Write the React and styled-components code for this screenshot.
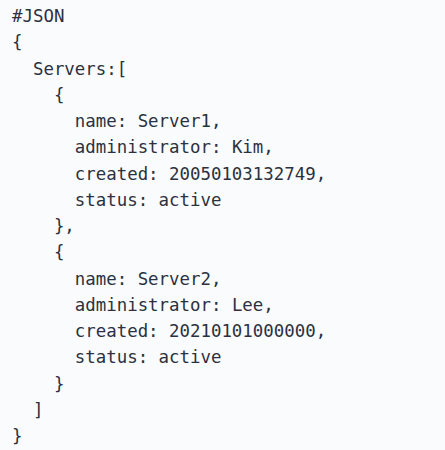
import React from "react"
import styled, { createGlobalStyle } from "styled-components"

const GlobalStyle = createGlobalStyle`
  html, body {
    margin: 0;
    padding: 0;
    background: #fafbfd;
  }
`

const CodeBlock = styled.div`
  box-sizing: border-box;
  width: 445px;
  height: 450px;
  padding: 3px 12px 0;
  background: #fafbfd;
  font-family: "DejaVu Sans Mono", "Liberation Mono", monospace;
  font-size: 17.4px;
  line-height: 26.25px;
  color: #2b3140;
  overflow: hidden;
`

const Line = styled.div`
  white-space: pre;
  padding-left: ${(p) => p.level * 2}ch;
  height: 26.25px;
`

const servers = [
  { name: "Server1", administrator: "Kim", created: "20050103132749", status: "active" },
  { name: "Server2", administrator: "Lee", created: "20210101000000", status: "active" },
]

export default function App() {
  return (
    <>
      <GlobalStyle />
      <CodeBlock>
        <Line level={0}>#JSON</Line>
        <Line level={0}>{"{"}</Line>
        <Line level={1}>Servers:[</Line>
        {servers.map((s, i) => (
          <React.Fragment key={s.name}>
            <Line level={2}>{"{"}</Line>
            <Line level={3}>name: {s.name},</Line>
            <Line level={3}>administrator: {s.administrator},</Line>
            <Line level={3}>created: {s.created},</Line>
            <Line level={3}>status: {s.status}</Line>
            <Line level={2}>{i < servers.length - 1 ? "}," : "}"}</Line>
          </React.Fragment>
        ))}
        <Line level={1}>]</Line>
        <Line level={0}>{"}"}</Line>
      </CodeBlock>
    </>
  )
}
